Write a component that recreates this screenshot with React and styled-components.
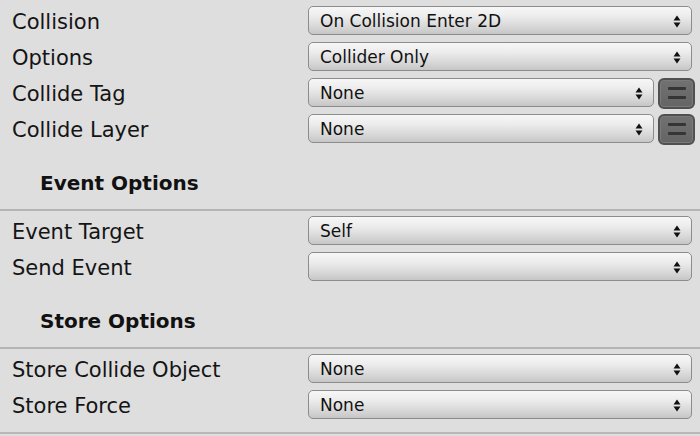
import React from 'react';
import styled, { createGlobalStyle } from 'styled-components';

const GlobalStyle = createGlobalStyle`
  html, body {
    margin: 0;
    padding: 0;
    background: #dedede;
  }
  body {
    font-family: "DejaVu Sans", "Liberation Sans", sans-serif;
    color: #111;
  }
`;

const Panel = styled.div`
  width: 700px;
  height: 436px;
  background: #dedede;
  overflow: hidden;
  display: flex;
  flex-direction: column;
`;

const Group = styled.div`
  display: flex;
  flex-direction: column;
  gap: 7px;
  padding-top: ${p => p.$top}px;
`;

const Row = styled.div`
  height: 29px;
  display: flex;
  align-items: center;
`;

const Label = styled.div`
  width: 308px;
  padding: 3px 0 0 12px;
  box-sizing: border-box;
  font-size: 21px;
  line-height: 29px;
  white-space: nowrap;
  color: #141414;
`;

const Select = styled.div`
  flex: 0 0 ${p => p.$width}px;
  height: 29px;
  box-sizing: border-box;
  border: 1.5px solid #8c8c8c;
  border-radius: 5px;
  background: linear-gradient(#f7f7f7 0%, #ececec 35%, #d6d6d6 75%, #c6c6c6 100%);
  display: flex;
  align-items: center;
  justify-content: space-between;
  padding: 1px 10px 0 11px;
  font-size: 17px;
  color: #111;
`;

const Arrows = () => (
  <svg width="8" height="13" viewBox="0 0 8 13">
    <path d="M4 0.5 L7.5 5.5 L0.5 5.5 Z" fill="#111" />
    <path d="M4 12.5 L7.5 7.5 L0.5 7.5 Z" fill="#111" />
  </svg>
);

const MenuButton = styled.div`
  flex: 0 0 37px;
  height: 31px;
  margin: 1px 0 0 4px;
  box-sizing: border-box;
  border-radius: 6px;
  border: 2px solid #505050;
  background: linear-gradient(#727272, #646464);
  box-shadow: inset 0 0 0 1px #7a7a7a;
  display: flex;
  flex-direction: column;
  align-items: center;
  justify-content: center;
  gap: 6px;
  span {
    display: block;
    width: 18px;
    height: 3px;
    border-radius: 1px;
    background: #353535;
  }
`;

const Header = styled.div`
  height: 68px;
  box-sizing: border-box;
  padding: 29px 0 0 40px;
  font-size: 20px;
  line-height: 22px;
  font-weight: bold;
  color: #111;
  border-bottom: 2px solid #b4b4b4;
`;

const BottomLine = styled.div`
  margin-top: 13px;
  border-bottom: 2px solid #b8b8b8;
`;

const Field = ({ label, value, tagged }) => (
  <Row>
    <Label>{label}</Label>
    <Select $width={tagged ? 346 : 384}>
      <span>{value}</span>
      <Arrows />
    </Select>
    {tagged && (
      <MenuButton>
        <span />
        <span />
      </MenuButton>
    )}
  </Row>
);

export default function App() {
  return (
    <Panel>
      <GlobalStyle />
      <Group $top={6}>
        <Field label="Collision" value="On Collision Enter 2D" />
        <Field label="Options" value="Collider Only" />
        <Field label="Collide Tag" value="None" tagged />
        <Field label="Collide Layer" value="None" tagged />
      </Group>
      <Header>Event Options</Header>
      <Group $top={5}>
        <Field label="Event Target" value="Self" />
        <Field label="Send Event" value="" />
      </Group>
      <Header>Store Options</Header>
      <Group $top={5}>
        <Field label="Store Collide Object" value="None" />
        <Field label="Store Force" value="None" />
      </Group>
      <BottomLine />
    </Panel>
  );
}
